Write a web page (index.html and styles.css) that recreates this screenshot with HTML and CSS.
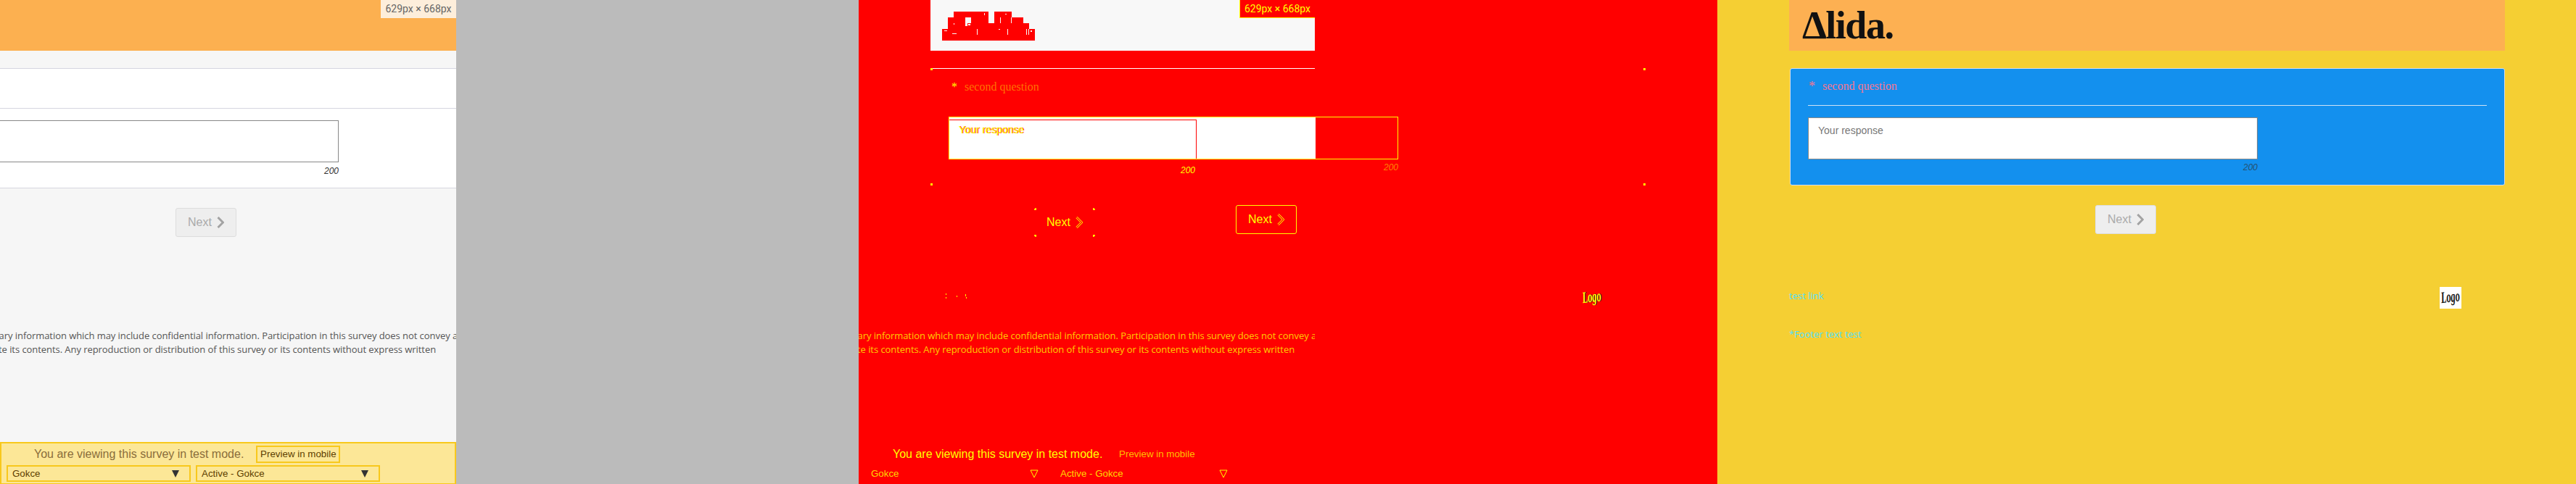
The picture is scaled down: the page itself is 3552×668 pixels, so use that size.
FILE: index.html

```html
<!DOCTYPE html>
<html lang="en">
<head>
  <meta charset="UTF-8">
  <title>Survey test mode comparison</title>
  <link rel="stylesheet" href="styles.css">
</head>
<body>
  <div class="compare">

    <!-- left: cropped browser shot on a grey backdrop -->
    <section class="panel shot-panel">
      <div class="shot">
        <div class="head"><span class="size-tag">629px × 668px</span></div>
        <div class="shot-card">
          <div class="shot-question"></div>
          <div class="shot-answer">
            <div class="shot-field"></div>
            <div class="count shot-count">200</div>
          </div>
        </div>
        <div class="shot-nav">
          <button class="next">Next
            <svg class="chevron" viewBox="0 0 10 16"><polyline points="1.5,1 8.5,8 1.5,15"/></svg>
          </button>
        </div>
        <div class="legal">
          <p>tary information which may include confidential information. Participation in this survey does not convey a</p>
          <p>te its contents. Any reproduction or distribution of this survey or its contents without express written</p>
        </div>
        <div class="test-bar">
          <div class="test-top">
            <span class="test-msg">You are viewing this survey in test mode.</span>
            <button class="preview">Preview in mobile</button>
          </div>
          <div class="test-selects">
            <div class="pick"><span>Gokce</span><svg class="arrow" viewBox="0 0 10 10"><polygon points="0,0 10,0 5,10"/></svg></div>
            <div class="pick"><span>Active - Gokce</span><svg class="arrow" viewBox="0 0 10 10"><polygon points="0,0 10,0 5,10"/></svg></div>
          </div>
        </div>
      </div>
    </section>

    <!-- middle: pixel difference of the other two -->
    <section class="panel diff-panel">
      <div class="diff-head">
        <svg class="blob" width="128" height="40" viewBox="0 0 128 40">
          <polygon class="blob-red" points="16,0 64,0 64,16 72,16 72,0 96,0 96,8 112,8 112,16 120,16 120,24 128,24 128,40 0,40 0,24 8,24 8,8 16,8"/>
          <g class="blob-dots">
            <rect x="32" y="8" width="8" height="8"/>
            <rect x="32" y="16" width="3" height="4"/>
            <rect x="36" y="17" width="3" height="2"/>
            <rect x="48" y="24" width="1" height="8"/>
            <rect x="80" y="8" width="1" height="8"/>
            <rect x="95" y="8" width="1" height="8"/>
            <rect x="90" y="24" width="1" height="8"/>
            <rect x="116" y="24" width="1" height="8"/>
            <rect x="119" y="24" width="1" height="8"/>
            <rect x="3" y="26" width="4" height="1"/>
            <rect x="14" y="30" width="6" height="1"/>
            <rect x="78" y="24" width="2" height="1"/>
            <rect x="122" y="26" width="2" height="2"/>
            <rect x="16" y="16" width="1" height="2"/>
            <rect x="58" y="2" width="1" height="3"/>
            <rect x="87" y="3" width="2" height="1"/>
          </g>
        </svg>
        <span class="size-tag diff-tag">629px × 668px</span>
      </div>
      <div class="diff-line"></div>
      <div class="diff-question"><span class="diff-star">*</span><span>second question</span></div>
      <div class="diff-field">
        <div class="diff-fill">
          <div class="diff-inner"><span class="diff-ph">Your response</span></div>
        </div>
      </div>
      <div class="diff-counts">
        <span class="count diff-count">200</span>
        <span class="count diff-count faint">200</span>
      </div>
      <div class="diff-nav">
        <div class="next diff-next marks">Next
          <svg class="chevron" viewBox="0 0 10 16"><polyline points="1.5,1 8.5,8 1.5,15"/><polyline class="core" points="1.5,1 8.5,8 1.5,15"/></svg>
        </div>
        <div class="next diff-next outlined">Next
          <svg class="chevron" viewBox="0 0 10 16"><polyline points="1.5,1 8.5,8 1.5,15"/><polyline class="core" points="1.5,1 8.5,8 1.5,15"/></svg>
        </div>
      </div>
      <div class="legal diff-legal">
        <p>tary information which may include confidential information. Participation in this survey does not convey a</p>
        <p>te its contents. Any reproduction or distribution of this survey or its contents without express written</p>
      </div>
      <div class="test-bar diff-bar">
        <div class="test-top">
          <span class="test-msg">You are viewing this survey in test mode.</span>
          <span class="preview">Preview in mobile</span>
        </div>
        <div class="test-selects">
          <div class="pick"><span>Gokce</span><svg class="arrow" viewBox="0 0 12 12"><polygon points="1,1 11,1 6,11"/></svg></div>
          <div class="pick"><span>Active - Gokce</span><svg class="arrow" viewBox="0 0 12 12"><polygon points="1,1 11,1 6,11"/></svg></div>
        </div>
      </div>
      <div class="diff-corners"></div>
      <svg class="diff-specks" width="30" height="8" viewBox="0 0 30 8">
        <rect x="0" y="0" width="1" height="2"/>
        <rect x="0" y="5" width="1" height="2"/>
        <rect x="15" y="3" width="1" height="2"/>
        <rect x="27" y="1" width="1" height="3"/>
        <rect x="28" y="5" width="1" height="2"/>
      </svg>
      <div class="logo-box diff-logo"><span>Logo</span></div>
    </section>

    <!-- right: the full survey page -->
    <section class="panel page-panel">
      <div class="page">
        <div class="head page-head"><span class="brand">Δlida.</span></div>
        <div class="card">
          <div class="question"><span class="star">*</span><span>second question</span></div>
          <textarea class="field" placeholder="Your response"></textarea>
          <div class="count page-count">200</div>
        </div>
        <div class="page-nav">
          <button class="next">Next
            <svg class="chevron" viewBox="0 0 10 16"><polyline points="1.5,1 8.5,8 1.5,15"/></svg>
          </button>
        </div>
        <div class="foot">
          <div class="foot-links">
            <a class="foot-link" href="#">test link</a>
            <div class="foot-text">*Footer text test</div>
          </div>
          <div class="logo-box"><span>Logo</span></div>
        </div>
      </div>
    </section>

  </div>
</body>
</html>
```

FILE: styles.css

```css
body {
  margin: 0;
  font-family: "Liberation Sans", Arial, sans-serif;
  overflow: hidden;
}
p {
  margin: 0;
}
.compare {
  display: flex;
  width: 3552px;
  height: 668px;
}
.panel {
  position: relative;
  width: 1184px;
  height: 668px;
  overflow: hidden;
  flex: none;
}

/* shared bits */
.head {
  position: relative;
  height: 70px;
}
.size-tag {
  position: absolute;
  top: 0;
  right: 0;
  box-sizing: border-box;
  width: 104px;
  height: 25px;
  line-height: 25px;
  text-align: center;
  font-family: Roboto, sans-serif;
  font-size: 14px;
  color: #666;
  background-color: #fdeedb;
}
.next {
  box-sizing: border-box;
  display: flex;
  align-items: center;
  justify-content: center;
  gap: 7px;
  width: 84px;
  height: 40px;
  padding: 0;
  font-family: "Liberation Sans", Arial, sans-serif;
  font-size: 16px;
  color: #aaa;
  background-color: #eee;
  border: 1px solid #ddd;
  border-radius: 3px;
}
.chevron {
  width: 10px;
  height: 16px;
  fill: none;
  stroke: #a3a3a3;
  stroke-width: 3;
}
.count {
  font-size: 12px;
  font-style: italic;
  line-height: 14px;
  text-align: right;
}
.legal {
  flex: none;
  width: 631px;
  margin: 127px 0 0 -2px;
  overflow: hidden;
  font-family: "Open Sans", sans-serif;
  font-size: 13px;
  line-height: 19px;
  letter-spacing: -0.06px;
  color: #555;
  white-space: nowrap;
}
.legal p:first-child {
  margin-left: -4px;
}
.test-bar {
  box-sizing: border-box;
  width: 629px;
  height: 58px;
  padding: 3px 0 0 7px;
  border: 2px solid #f8c81c;
  border-bottom-width: 1px;
  background-color: #fce797;
}
.test-top {
  display: flex;
  align-items: center;
  height: 24px;
  padding-left: 38px;
}
.test-msg {
  font-size: 16px;
  color: #8a6d3b;
}
.preview {
  box-sizing: border-box;
  height: 24px;
  width: 116px;
  margin-left: 17px;
  padding: 0;
  font-family: "Liberation Sans", Arial, sans-serif;
  font-size: 13.33px;
  line-height: 20px;
  text-align: center;
  color: #5c3d00;
  background-color: transparent;
  border: 2px solid #f8c81c;
}
.test-selects {
  display: flex;
  gap: 7px;
  margin-top: 3px;
}
.pick {
  box-sizing: border-box;
  display: flex;
  align-items: center;
  justify-content: space-between;
  width: 254px;
  height: 23px;
  padding: 0 14px 0 6px;
  font-size: 13.33px;
  color: #5c3d00;
  border: 2px solid #f8c81c;
}
.arrow {
  width: 10px;
  height: 10px;
  fill: #333;
}
.logo-box {
  width: 30px;
  height: 30px;
  overflow: hidden;
  background-color: #fff;
  text-align: center;
}
.logo-box span {
  display: inline-block;
  font-family: "Liberation Serif", serif;
  font-style: italic;
  font-weight: bold;
  font-size: 13px;
  line-height: 28px;
  color: #111;
  transform: rotate(-6deg) scale(0.95, 1.7);
}

/* left panel */
.shot-panel {
  background-color: #bbb;
}
.shot {
  width: 629px;
  height: 668px;
  overflow: hidden;
  display: flex;
  flex-direction: column;
  background-color: #f6f6f6;
}
.shot .head {
  flex: none;
  background-color: #fcb050;
}
.shot-card {
  flex: none;
  margin-top: 24px;
  height: 166px;
  box-sizing: border-box;
  background-color: #fff;
  border-top: 1px solid #d6d6e0;
  border-bottom: 1px solid #d6d6e0;
}
.shot-question {
  height: 54px;
  border-bottom: 1px solid #d6d6e0;
}
.shot-answer {
  width: 467px;
  padding-top: 16px;
}
.shot-field {
  box-sizing: border-box;
  height: 58px;
  border: 1px solid #888;
  border-left: none;
}
.shot-count {
  margin-top: 5px;
  color: #333;
}
.shot-nav {
  flex: none;
  padding: 27px 0 0 242px;
}
.shot .test-bar {
  flex: none;
  margin-top: auto;
}

/* middle panel */
.diff-panel {
  background-color: #f00;
}
.diff-head {
  position: relative;
  box-sizing: border-box;
  width: 530px;
  height: 70px;
  margin-left: 99px;
  padding: 16px 0 0 16px;
  background-color: #f8f8f8;
}
.blob {
  display: block;
}
.blob-red {
  fill: #f00;
}
.blob-dots {
  fill: #f8f8f8;
}
.diff-tag {
  color: #ff0;
  background-color: #f00;
  border-left: 1px solid #ff0;
  border-bottom: 1px solid #ff0;
}
.diff-line {
  height: 1px;
  width: 527px;
  margin: 24px 0 0 102px;
  background-color: #fff;
}
.diff-question {
  display: flex;
  gap: 10px;
  align-items: center;
  height: 66px;
  padding-left: 128px;
  box-sizing: border-box;
  padding-bottom: 16px;
  font-family: "Liberation Serif", serif;
  font-size: 16px;
  color: rgba(255, 255, 0, 0.45);
}
.diff-star {
  color: #ff0;
}
.diff-field {
  box-sizing: border-box;
  width: 620px;
  height: 59px;
  margin-left: 124px;
  border: 1px solid #ff0;
}
.diff-fill {
  width: 505px;
  height: 57px;
  background-color: #fff;
}
.diff-inner {
  box-sizing: border-box;
  width: 341px;
  height: 54px;
  position: relative;
  top: 3px;
  border-top: 1px solid #f00;
  border-right: 1px solid #f00;
}
.diff-ph {
  display: block;
  padding: 5px 0 0 13px;
  font-size: 14px;
  color: #ff0;
  text-shadow: 1px 0 0 #f00;
}
.diff-counts {
  display: flex;
  justify-content: space-between;
  align-items: flex-start;
  box-sizing: border-box;
  width: 620px;
  height: 22px;
  margin-left: 124px;
  padding-left: 320px;
}
.diff-count {
  margin-top: 8px;
  color: #ff0;
}
.diff-count.faint {
  margin-top: 4px;
  color: rgba(255, 255, 0, 0.5);
}
.diff-nav {
  display: flex;
  gap: 194px;
  align-items: flex-start;
  margin: 41px 0 0 242px;
  height: 44px;
}
.diff-next {
  color: #ff0;
  background-color: transparent;
  border-color: transparent;
}
.diff-next .chevron {
  stroke: #ff0;
}
.diff-next .core {
  stroke: #f00;
  stroke-width: 1.2;
}
.marks {
  margin-top: 4px;
  background-image:
    linear-gradient(#ff0, #ff0), linear-gradient(#ff0, #ff0),
    linear-gradient(#ff0, #ff0), linear-gradient(#ff0, #ff0);
  background-size: 3px 3px;
  background-repeat: no-repeat;
  background-position: 0 0, 100% 0, 0 100%, 100% 100%;
  background-origin: border-box;
}
.outlined {
  border-color: #ff0;
}
.diff-legal {
  color: rgba(255, 255, 0, 0.8);
}
.diff-bar {
  margin-top: 118px;
  background-color: transparent;
  border-color: transparent;
}
.diff-bar .test-msg {
  color: #ff0;
}
.diff-bar .preview {
  color: rgba(255, 255, 0, 0.75);
  border-color: transparent;
}
.diff-bar .pick {
  color: rgba(255, 255, 0, 0.85);
  border-color: transparent;
}
.diff-bar .arrow {
  width: 12px;
  height: 12px;
  margin-right: -1px;
  fill: none;
  stroke: #ff0;
  stroke-width: 1;
}
.diff-corners {
  position: absolute;
  left: 99px;
  top: 94px;
  width: 986px;
  height: 162px;
  background-image:
    linear-gradient(#ff0, #ff0), linear-gradient(#ff0, #ff0),
    linear-gradient(#ff0, #ff0), linear-gradient(#ff0, #ff0);
  background-size: 3px 3px;
  background-repeat: no-repeat;
  background-position: 0 0, 100% 0, 0 100%, 100% 100%;
}
.diff-specks {
  position: absolute;
  left: 120px;
  top: 405px;
  fill: #ff0;
}
.diff-logo {
  position: absolute;
  left: 996px;
  top: 396px;
  background-color: transparent;
}
.diff-logo span {
  color: #ff0;
  text-shadow: 1px 0 0 #222;
}

/* right panel */
.page-panel {
  background-color: #f5cf33;
}
.page {
  box-sizing: border-box;
  width: 1184px;
  padding: 0 98px 0 99px;
}
.page-head {
  box-sizing: border-box;
  padding-left: 18px;
  background-color: #fdb052;
}
.brand {
  display: block;
  font-family: "Liberation Serif", serif;
  font-weight: bold;
  font-size: 54px;
  line-height: 70px;
  letter-spacing: -1.5px;
  color: #111;
}
.card {
  box-sizing: border-box;
  height: 162px;
  margin: 24px 0 0 1px;
  width: 986px;
  padding: 0 24px;
  background-color: #1390ee;
  border: 1px solid #d8dde6;
  border-radius: 3px;
}
.question {
  display: flex;
  align-items: center;
  gap: 10px;
  box-sizing: border-box;
  height: 51px;
  padding: 0 0 2px 1px;
  font-family: "Liberation Serif", serif;
  font-size: 16px;
  color: #f7758f;
  border-bottom: 1px solid #cfe3f5;
}
.star {
  width: 9px;
  font-size: 18px;
}
.field {
  display: block;
  box-sizing: border-box;
  width: 620px;
  height: 58px;
  margin-top: 16px;
  padding: 9px 13px;
  font-family: "Liberation Sans", Arial, sans-serif;
  font-size: 14px;
  resize: none;
  background-color: #fff;
  border: 1px solid #888;
  border-radius: 0;
  outline: none;
}
.field::placeholder {
  color: #777;
  opacity: 1;
}
.page-count {
  width: 620px;
  margin-top: 4px;
  color: #25506f;
}
.page-nav {
  padding: 27px 0 0 422px;
}
.foot {
  display: flex;
  justify-content: space-between;
  margin: 73px 0 0 0;
  padding-right: 60px;
}
.foot-links {
  font-family: "Open Sans", sans-serif;
  font-size: 13px;
  line-height: 18px;
  color: #50e0ff;
}
.foot-link {
  display: block;
  margin-top: 3px;
  color: #50e0ff;
  text-decoration: none;
}
.foot-text {
  margin-top: 35px;
}
```
